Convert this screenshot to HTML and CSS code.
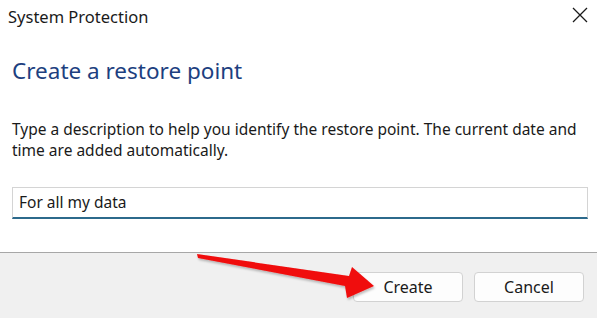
FILE: index.html
```html
<!DOCTYPE html>
<html lang="en">
<head>
    <meta charset="UTF-8">
    <title>System Protection</title>
    <link rel="stylesheet" href="styles.css">
</head>
<body>

<div class="dialog">
    <div class="titlebar">
        <span class="title">System Protection</span>
        <button class="close" aria-label="Close">
            <svg width="16" height="16" viewBox="0 0 16 16">
                <path d="M1 1 L15 15 M15 1 L1 15" stroke="#1a1a1a" stroke-width="1.3" fill="none"/>
            </svg>
        </button>
    </div>

    <div class="content">
        <h1 class="heading">Create a restore point</h1>
        <p class="description">Type a description to help you identify the restore point. The current date and time are added automatically.</p>
        <div class="input-box">For all my data</div>
    </div>

    <div class="footer">
        <button class="btn">Create</button>
        <button class="btn">Cancel</button>
    </div>

    <!-- annotation arrow drawn over the dialog -->
    <svg class="arrow" width="597" height="318" viewBox="0 0 597 318">
        <defs>
            <filter id="shadow" x="-10%" y="-10%" width="120%" height="140%">
                <feDropShadow dx="1" dy="2" stdDeviation="1.2" flood-color="#000" flood-opacity="0.25"/>
            </filter>
        </defs>
        <polygon points="197,254 198,258 345,286 347,298 374,286 352,267 349,276" fill="#f00a0a" filter="url(#shadow)"/>
    </svg>
</div>

</body>
</html>
```

FILE: styles.css
```css
body {
    margin: 0;
    background: #ffffff;
    font-family: "Noto Sans", "Open Sans", sans-serif;
    color: #1a1a1a;
}
.dialog {
    position: relative;
    width: 597px;
    height: 318px;
    display: flex;
    flex-direction: column;
    overflow: hidden;
}
.titlebar {
    display: flex;
    justify-content: space-between;
    align-items: center;
    height: 32px;
    padding: 0 9px 0 8px;
}
.title {
    font-size: 16.5px;
}
.close {
    background: none;
    border: none;
    padding: 0;
    width: 16px;
    height: 16px;
    margin-top: -2px;
}
.content {
    flex: 1;
    padding: 0 9px 0 12px;
}
.heading {
    margin: 23px 0 0 0;
    font-size: 22.5px;
    font-weight: normal;
    color: #1d3f80;
    line-height: 32px;
}
.description {
    margin: 32px 0 0 0;
    max-width: 572px;
    font-size: 15.5px;
    line-height: 21px;
}
.input-box {
    margin-top: 26px;
    height: 29px;
    border: 1px solid #d4d4d4;
    border-bottom: 2px solid #2c6a8c;
    padding-left: 6px;
    font-size: 15.5px;
    line-height: 28px;
    box-sizing: content-box;
}
.footer {
    height: 66px;
    background: #f0f0f0;
    border-top: 1px solid #a7a7a7;
    display: flex;
    justify-content: flex-end;
    align-items: flex-start;
    gap: 11px;
    padding: 19px 13px 0 0;
    box-sizing: border-box;
}
.btn {
    width: 110px;
    height: 30px;
    background: #fdfdfd;
    border: 1px solid #d2d2d2;
    border-radius: 4px;
    font-family: "Noto Sans", "Open Sans", sans-serif;
    font-size: 16px;
    color: #1a1a1a;
    padding: 0;
}
.arrow {
    position: absolute;
    top: 0;
    left: 0;
    pointer-events: none;
}
```
